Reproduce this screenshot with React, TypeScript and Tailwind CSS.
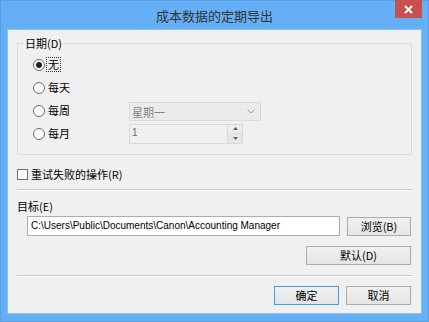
import React from 'react';

const cjk = "font-['Segoe_UI','Noto_Sans_CJK_SC',sans-serif]";

function Radio({ checked, label, focused }: { checked?: boolean; label: string; focused?: boolean }) {
  return (
    <div className="flex items-center gap-[2px] h-[13px]">
      <span className="w-[12px] h-[12px] rounded-full border border-[#6a6a6a] bg-white flex items-center justify-center">
        {checked && <span className="w-[6px] h-[6px] rounded-full bg-[#222]" />}
      </span>
      <span className={focused ? 'outline outline-1 outline-dotted outline-[#333] leading-[13px] px-[1px]' : 'leading-[13px] px-[1px]'}>
        {label}
      </span>
    </div>
  );
}

function Btn({ children, primary, w }: { children: React.ReactNode; primary?: boolean; w: string }) {
  return (
    <button
      className={`${w} h-[19px] text-[11px] leading-none bg-gradient-to-b from-[#f0f0f0] to-[#e5e5e5] border ${
        primary ? 'border-[#3c9ef0]' : 'border-[#acacac]'
      } text-black`}
    >
      {children}
    </button>
  );
}

export default function App() {
  return (
    <div className={`w-[429px] h-[322px] bg-[#64aff5] border border-[#5a9fe0] flex flex-col ${cjk} text-[11px] leading-[14px] text-black`}>
      {/* 标题栏 */}
      <div className="relative h-[28px] flex items-center justify-center">
        <span className="text-[13px] text-[#333] mt-[1px]">成本数据的定期导出</span>
        <div className="absolute right-[6px] top-[-1px] w-[27px] h-[18px] bg-[#c75050] flex items-center justify-center">
          <svg width="9" height="9" viewBox="0 0 9 9">
            <path d="M1 1 L8 8 M8 1 L1 8" stroke="white" strokeWidth="2" />
          </svg>
        </div>
      </div>

      {/* 客户区 */}
      <div className="mx-[6px] h-[285px] bg-[#f0f0f0] border border-[#8cc2f2] px-[9px] pt-[7px]">
        <fieldset className="border border-[#dcdcdc] h-[118px] pl-[15px] pr-0 pt-0 m-0">
          <legend className="px-[1px] ml-[-9px] leading-[13px]">日期(D)</legend>
          <div className="flex flex-col gap-[10px] mt-[8px]">
            <Radio checked focused label="无" />
            <Radio label="每天" />
            <div className="flex items-center h-[13px]">
              <div className="w-[96px]">
                <Radio label="每周" />
              </div>
              <div className="w-[132px] h-[19px] mt-[2px] border border-[#d9d9d9] bg-[#ebebeb] flex items-center justify-between pl-[2px] pr-[5px] text-[#838383]">
                <span>星期一</span>
                <svg width="8" height="5" viewBox="0 0 8 5">
                  <path d="M0.5 0.5 L4 4 L7.5 0.5" stroke="#a0a0a0" fill="none" />
                </svg>
              </div>
            </div>
            <div className="flex items-center h-[13px]">
              <div className="w-[96px]">
                <Radio label="每月" />
              </div>
              <div className="w-[114px] h-[20px] border border-[#d9d9d9] bg-[#f0f0f0] flex items-stretch">
                <span className="flex-1 pl-[2px] pt-[1px] text-[#6d6d6d] font-['Liberation_Sans',sans-serif] text-[10px]">1</span>
                <div className="w-[15px] flex flex-col border-l border-[#d9d9d9]">
                  <div className="flex-1 flex items-center justify-center border-b border-[#e0e0e0] bg-[#ececec]">
                    <svg width="5" height="3" viewBox="0 0 5 3"><path d="M0 3 L2.5 0 L5 3 Z" fill="#606060" /></svg>
                  </div>
                  <div className="flex-1 flex items-center justify-center bg-[#e6e6e6]">
                    <svg width="5" height="3" viewBox="0 0 5 3"><path d="M0 0 L2.5 3 L5 0 Z" fill="#606060" /></svg>
                  </div>
                </div>
              </div>
            </div>
          </div>
        </fieldset>

        <div className="flex items-center gap-[3px] mt-[12px] h-[14px]">
          <span className="w-[11px] h-[11px] border border-[#707070] bg-white" />
          <span>重试失败的操作(R)</span>
        </div>

        <div className="mt-[8px] border-t border-[#c8c8c8] border-b border-b-white" />

        <div className="mt-[8px]">目标(E)</div>
        <div className="flex items-center mt-[3px] pl-[10px] gap-[7px]">
          <div className="w-[313px] h-[20px] border border-[#abadb3] bg-white flex items-center pl-[3px] font-['Liberation_Sans',sans-serif] text-[10px]">
            C:\Users\Public\Documents\Canon\Accounting Manager
          </div>
          <Btn w="w-[64px]">浏览(B)</Btn>
        </div>

        <div className="flex justify-end mt-[10px] pr-[1px]">
          <Btn w="w-[105px]">默认(D)</Btn>
        </div>

        <div className="mt-[10px] border-t border-[#c8c8c8] border-b border-b-white" />

        <div className="flex justify-end gap-[7px] mt-[9px] pr-[1px]">
          <Btn primary w="w-[65px]">确定</Btn>
          <Btn w="w-[65px]">取消</Btn>
        </div>
      </div>
    </div>
  );
}
